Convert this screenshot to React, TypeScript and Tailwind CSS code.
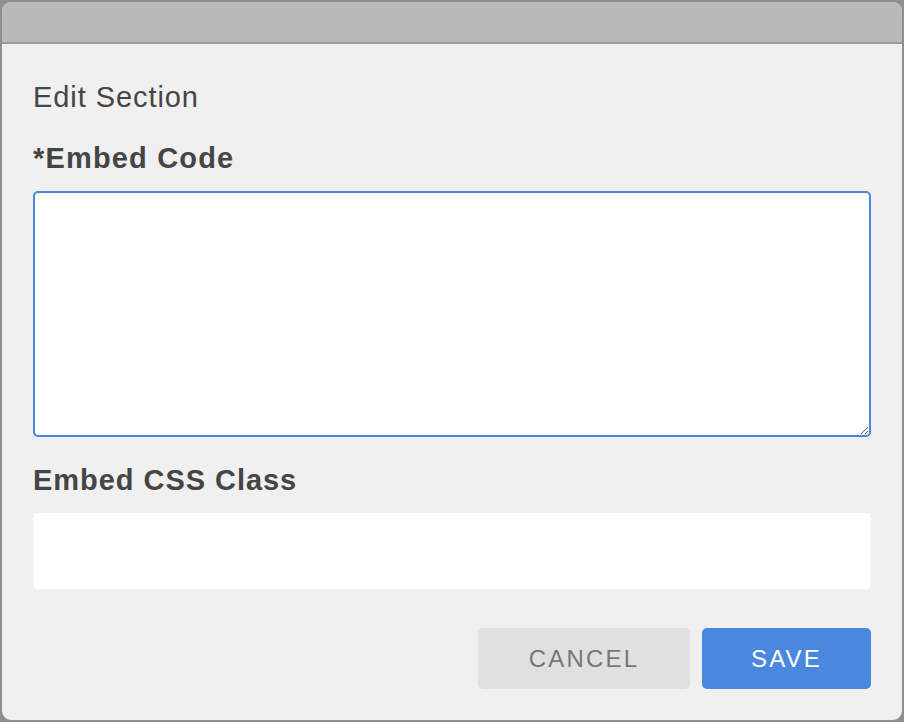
import React from 'react';

// Edit Section dialog — embed code + css class, cancel / save footer.
export default function App() {
  return (
    <div className="h-[722px] w-[904px] bg-[#8e8e8e] font-['Liberation_Sans',Arial,sans-serif]">
      <div className="flex h-full flex-col overflow-hidden rounded-[11px] border-2 border-[#8e8e8e] bg-[#f0f0f0]">
        {/* window title bar */}
        <div className="h-[42px] shrink-0 border-b-2 border-[#9c9c9c] bg-[#b9b9b9]" />

        <div className="flex flex-1 flex-col px-[31px] pt-[39px]">
          <h1 className="text-[29px] leading-[29px] tracking-[0.032em] text-[#454545]">Edit Section</h1>

          <label className="mt-[32px] text-[29px] font-bold leading-[29px] tracking-[0.04em] text-[#454545]">*Embed Code</label>
          <textarea className="mt-[18px] h-[246px] w-full resize-y rounded-[5px] border-2 border-[#4a88e0] bg-white outline-none" />

          <label className="mt-[29px] text-[29px] font-bold leading-[29px] tracking-[0.033em] text-[#454545]">Embed CSS Class</label>
          <input className="mt-[18px] h-[76px] w-full rounded-[5px] bg-white outline-none" />

          <div className="mt-[39px] flex justify-end gap-[12px]">
            <button className="h-[61px] w-[212px] rounded-[5px] bg-[#e0e0e0] text-[24px] tracking-[0.09em] text-[#777777]">
              CANCEL
            </button>
            <button className="h-[61px] w-[169px] rounded-[5px] bg-[#4a88e0] text-[24px] tracking-[0.09em] text-white">
              SAVE
            </button>
          </div>
        </div>
      </div>
    </div>
  );
}
